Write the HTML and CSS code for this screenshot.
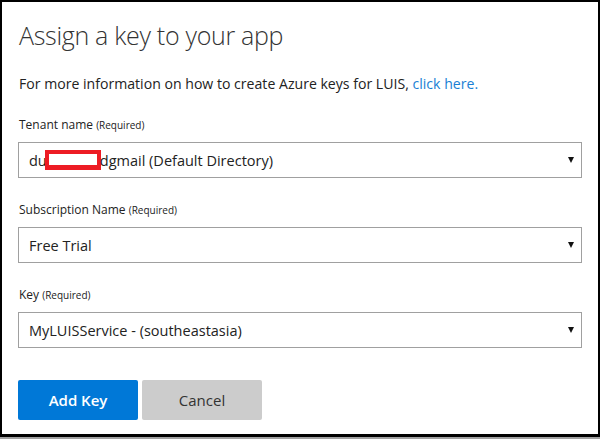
FILE: index.html
```html
<!DOCTYPE html>
<html>
<head>
<meta charset="utf-8">
<link rel="stylesheet" href="styles.css">
</head>
<body>
<div class="frame">
  <h1 class="title">Assign a key to your app</h1>
  <p class="info">For more information on how to create Azure keys for LUIS, <a class="link" href="#">click here.</a></p>
  <div class="field">
    <div class="label">Tenant name <span class="req">(Required)</span></div>
    <div class="select"><span class="value">du<span class="redact"></span>dgmail (Default Directory)</span><span class="arrow"></span></div>
  </div>
  <div class="field">
    <div class="label">Subscription Name <span class="req">(Required)</span></div>
    <div class="select"><span class="value">Free Trial</span><span class="arrow"></span></div>
  </div>
  <div class="field">
    <div class="label">Key <span class="req">(Required)</span></div>
    <div class="select"><span class="value">MyLUISService - (southeastasia)</span><span class="arrow"></span></div>
  </div>
  <div class="actions">
    <button class="btn primary">Add Key</button>
    <button class="btn secondary">Cancel</button>
  </div>
</div>
<div class="shadow"></div>
</body>
</html>
```
FILE: styles.css
```css
html, body {
  margin: 0;
  padding: 0;
  background: #fff;
}
body {
  width: 600px;
  height: 439px;
  overflow: hidden;
  font-family: "Open Sans", "Noto Sans", sans-serif;
  color: #222;
}
.frame {
  box-sizing: border-box;
  width: 600px;
  height: 437px;
  border: 2px solid #000;
  border-bottom-width: 3px;
  padding: 0 16px;
  display: flex;
  flex-direction: column;
}
.shadow {
  height: 2px;
  background: #a0a0a0;
}
.title {
  margin: 17px 0 0 1px;
  font-size: 25px;
  font-weight: 300;
  line-height: 32px;
  color: #333;
  letter-spacing: -0.3px;
}
.info {
  margin: 24px 0 0 1px;
  font-size: 14.1px;
  line-height: 18px;
  color: #222;
}
.link {
  color: #1a7fd4;
  text-decoration: none;
}
.field {
  margin-top: 24px;
}
.field + .field {
  margin-top: 24px;
}
.label {
  font-size: 12px;
  line-height: 16px;
  color: #222;
  margin-left: 1px;
}
.req {
  font-size: 10px;
}
.select {
  margin-top: 9px;
  box-sizing: border-box;
  height: 36px;
  border: 1px solid #a0a0a0;
  display: flex;
  align-items: center;
  justify-content: space-between;
  padding: 0 7px 0 10px;
}
.value {
  font-size: 14.5px;
  color: #222;
  display: flex;
  align-items: center;
}
.redact {
  display: inline-block;
  box-sizing: border-box;
  width: 56px;
  height: 20px;
  border: 4px solid #ed1c24;
  border-bottom-width: 5px;
  background: #fff;
  margin: 0 -1px 0 -2px;
}
.arrow {
  width: 0;
  height: 0;
  border-left: 3px solid transparent;
  border-right: 3px solid transparent;
  border-top: 6px solid #111;
}
.actions {
  margin-top: 32px;
  display: flex;
  gap: 4px;
}
.btn {
  width: 120px;
  height: 40px;
  border: none;
  border-radius: 2px;
  font-family: "Open Sans", "Noto Sans", sans-serif;
  font-size: 15px;
  padding: 0;
}
.primary {
  background: #0078d7;
  color: #fff;
  font-weight: 600;
}
.secondary {
  background: #cccccc;
  color: #333;
}
```
